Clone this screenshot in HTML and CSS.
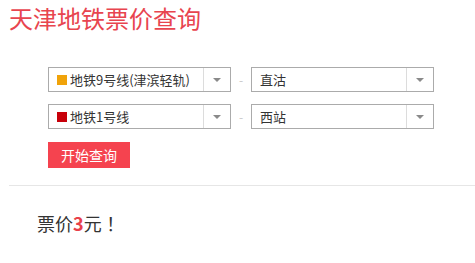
FILE: index.html
```html
<!DOCTYPE html>
<html lang="zh-CN">
<head>
<meta charset="utf-8">
<title>天津地铁票价查询</title>
<link rel="stylesheet" href="styles.css">
</head>
<body>
<h1 class="title">天津地铁票价查询</h1>
<div class="form">
  <div class="row">
    <div class="select">
      <span class="value"><i class="swatch swatch-orange"></i>地铁9号线(津滨轻轨)</span>
      <span class="arrow"><i class="tri"></i></span>
    </div>
    <span class="dash">-</span>
    <div class="select">
      <span class="value">直沽</span>
      <span class="arrow"><i class="tri"></i></span>
    </div>
  </div>
  <div class="row">
    <div class="select">
      <span class="value"><i class="swatch swatch-red"></i>地铁1号线</span>
      <span class="arrow"><i class="tri"></i></span>
    </div>
    <span class="dash">-</span>
    <div class="select">
      <span class="value">西站</span>
      <span class="arrow"><i class="tri"></i></span>
    </div>
  </div>
  <button class="btn">开始查询</button>
</div>
<hr class="divider">
<p class="result">票价<b class="num">3</b>元<span class="bang">！</span></p>
</body>
</html>
```
FILE: styles.css
```css
html, body {
  margin: 0;
  padding: 0;
  background: #fff;
}
body {
  font-family: "Noto Sans CJK SC", "Noto Sans", sans-serif;
  color: #333;
}
.title {
  margin: 0;
  padding: 2px 0 0 9px;
  height: 32px;
  line-height: 32px;
  font-size: 24px;
  font-weight: normal;
  color: #e8454f;
}
.form {
  padding: 33px 0 0 48px;
  display: flex;
  flex-direction: column;
  align-items: flex-start;
}
.row {
  display: flex;
  align-items: center;
  margin-bottom: 12px;
}
.row + .row {
  margin-bottom: 13px;
}
.select {
  box-sizing: border-box;
  width: 183px;
  height: 25px;
  border: 1px solid #ababab;
  display: flex;
  align-items: stretch;
  background: #fff;
}
.value {
  flex: 1;
  display: flex;
  align-items: center;
  padding-left: 8px;
  font-size: 13px;
  line-height: 23px;
  color: #333;
  white-space: nowrap;
  overflow: hidden;
}
.swatch {
  display: inline-block;
  width: 10px;
  height: 10px;
  margin-right: 3px;
}
.swatch-orange { background: #f0a30a; }
.swatch-red { background: #c8000a; }
.arrow {
  width: 26px;
  border-left: 1px solid #dcdcdc;
  display: flex;
  align-items: center;
  justify-content: center;
}
.tri {
  width: 0;
  height: 0;
  border-left: 4px solid transparent;
  border-right: 4px solid transparent;
  border-top: 4px solid #8a8a8a;
}
.dash {
  width: 20px;
  text-align: center;
  font-size: 12px;
  color: #c8c8c8;
}
.btn {
  width: 82px;
  height: 26px;
  border: 0;
  padding: 0;
  background: #f5434f;
  color: #fff;
  font-family: "Noto Sans CJK SC", sans-serif;
  font-size: 14px;
  line-height: 26px;
  cursor: pointer;
}
.divider {
  margin: 17px 0 0 9px;
  border: 0;
  border-top: 1px solid #e6e6e6;
  height: 0;
}
.result {
  margin: 0;
  padding: 24px 0 0 37px;
  font-size: 18px;
  line-height: 26px;
  color: #333;
}
.bang {
  display: inline-block;
  width: 18px;
  font-family: "Noto Sans CJK JP", sans-serif;
  text-align: center;
}
.num {
  color: #e8404a;
  font-weight: bold;
}
```
